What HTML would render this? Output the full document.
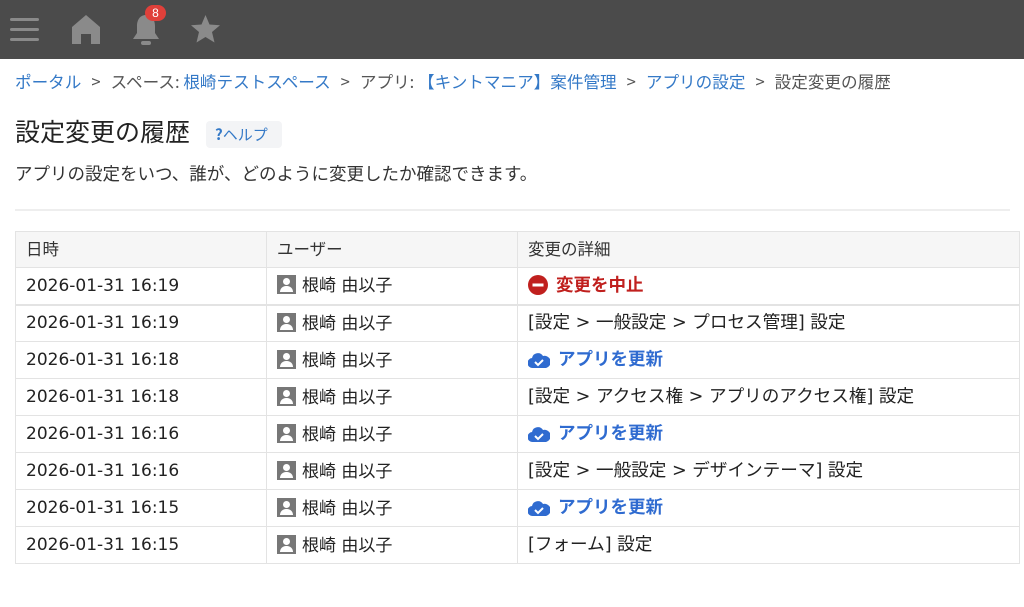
<!DOCTYPE html>
<html><head><meta charset="utf-8"><style>
*{margin:0;padding:0;box-sizing:border-box}
body{width:1024px;height:607px;overflow:hidden;background:#fff;font-family:"DejaVu Sans","Noto Sans CJK JP",sans-serif;color:#333}
.hdr{height:59px;background:#4b4b4b;position:relative}
.hdr svg{position:absolute}
.badge{position:absolute;left:145px;top:5px;width:21px;height:16px;border-radius:8px;background:#e0403a;color:#fff;font-size:12px;text-align:center;line-height:16px;font-family:"Liberation Sans",sans-serif}
.bc{position:absolute;top:69px;left:15px;font-size:16.6px;color:#555;white-space:nowrap;font-family:"Noto Sans CJK JP",sans-serif}
.bc a{color:#3479c7;text-decoration:none}
.bc .s{margin:0 10px}
h1{position:absolute;top:114px;left:15px;font-size:25px;font-weight:normal;color:#222;line-height:34px;font-family:"Noto Sans CJK JP",sans-serif}
.help{position:absolute;top:121px;left:206px;width:76px;height:27px;background:#f3f4f6;border-radius:4px;color:#3479c7;font-size:15px;line-height:27px;padding-left:9px;font-family:"Noto Sans CJK JP",sans-serif}
.desc{position:absolute;top:161px;left:15px;font-size:17.5px;color:#333;line-height:26px;font-family:"Noto Sans CJK JP",sans-serif}
.hr{position:absolute;top:209px;left:15px;width:995px;height:2px;background:#eee}
table{position:absolute;top:231px;left:15px;width:1005px;border-collapse:collapse;font-size:17px}
td{border:1px solid #e3e3e3;height:37px;padding:0 0 0 10px;color:#222;white-space:nowrap;line-height:20px;vertical-align:middle}
tr.h td{background:#f6f6f6;height:36px;color:#333;font-size:16.5px}
tr.t td{border-bottom:2px solid #e3e3e3}
td.d{font-size:17.6px}
.u{display:inline-block;width:19px;height:19px;background:#777;vertical-align:-3px;margin-right:6px;position:relative;overflow:hidden}
.u:before{content:"";position:absolute;left:6px;top:3px;width:7px;height:7px;border-radius:50%;background:#fff}
.u:after{content:"";position:absolute;left:3px;top:11px;width:13px;height:6px;border-radius:6px 6px 0 0;background:#fff}
.red{color:#c0201e;font-weight:bold;font-size:17.5px}
.blue{color:#2f6bd0;font-weight:bold;font-size:17.5px}
.ic{vertical-align:-4px;margin-right:8px}
</style></head><body>
<div class="hdr">
<svg style="left:10px;top:17px" width="30" height="26"><g fill="#8a8a8a"><rect x="0" y="1" width="29" height="3" rx="1.5"/><rect x="0" y="11" width="29" height="3" rx="1.5"/><rect x="0" y="21" width="29" height="3" rx="1.5"/></g></svg>
<svg style="left:71px;top:14px" width="30" height="31"><path d="M15 1 L29 13 V30 H20 V20 H10 V30 H1 V13 Z" fill="#8a8a8a"/></svg>
<svg style="left:131px;top:13px" width="30" height="33"><path d="M15 2 C9 2 6 7 6 13 V20 L2 26 H28 L24 20 V13 C24 7 21 2 15 2Z" fill="#8a8a8a"/><rect x="10" y="28" width="10" height="4" rx="2" fill="#8a8a8a"/></svg>
<div class="badge">8</div>
<svg style="left:190px;top:14px" width="31" height="30"><path d="M15.5 1 L19.5 10.5 L30 11.3 L22 18 L24.5 28.5 L15.5 23 L6.5 28.5 L9 18 L1 11.3 L11.5 10.5Z" fill="#8a8a8a"/></svg>
</div>
<div class="bc"><a>ポータル</a><span class="s">&gt;</span>スペース: <a>根崎テストスペース</a><span class="s">&gt;</span>アプリ: <a>【キントマニア】案件管理</a><span class="s">&gt;</span><a>アプリの設定</a><span class="s">&gt;</span>設定変更の履歴</div>
<h1>設定変更の履歴</h1>
<div class="help"><b>?</b>ヘルプ</div>
<div class="desc">アプリの設定をいつ、誰が、どのように変更したか確認できます。</div>
<div class="hr"></div>
<table>
<colgroup><col style="width:251px"><col style="width:251px"><col></colgroup>
<tr class="h"><td>日時</td><td>ユーザー</td><td>変更の詳細</td></tr>
<tr class="t"><td>2026-01-31 16:19</td><td><span class="u"></span>根崎 由以子</td><td><span class="red"><svg class="ic" width="20" height="20"><circle cx="10" cy="10" r="10" fill="#c0201e"/><rect x="4.5" y="8.5" width="11" height="3" fill="#fff"/></svg>変更を中止</span></td></tr>
<tr><td>2026-01-31 16:19</td><td><span class="u"></span>根崎 由以子</td><td class="d">[設定 &gt; 一般設定 &gt; プロセス管理] 設定</td></tr>
<tr><td>2026-01-31 16:18</td><td><span class="u"></span>根崎 由以子</td><td><span class="blue"><svg class="ic" width="22" height="18"><path d="M5 17 A5 5 0 0 1 4 7 A6 6 0 0 1 15 5 A5 5 0 0 1 18 17Z" fill="#2f6bd0"/><path d="M7 11 L10 14 L15 9" stroke="#fff" stroke-width="2" fill="none"/></svg>アプリを更新</span></td></tr>
<tr><td>2026-01-31 16:18</td><td><span class="u"></span>根崎 由以子</td><td class="d">[設定 &gt; アクセス権 &gt; アプリのアクセス権] 設定</td></tr>
<tr><td>2026-01-31 16:16</td><td><span class="u"></span>根崎 由以子</td><td><span class="blue"><svg class="ic" width="22" height="18"><path d="M5 17 A5 5 0 0 1 4 7 A6 6 0 0 1 15 5 A5 5 0 0 1 18 17Z" fill="#2f6bd0"/><path d="M7 11 L10 14 L15 9" stroke="#fff" stroke-width="2" fill="none"/></svg>アプリを更新</span></td></tr>
<tr><td>2026-01-31 16:16</td><td><span class="u"></span>根崎 由以子</td><td class="d">[設定 &gt; 一般設定 &gt; デザインテーマ] 設定</td></tr>
<tr><td>2026-01-31 16:15</td><td><span class="u"></span>根崎 由以子</td><td><span class="blue"><svg class="ic" width="22" height="18"><path d="M5 17 A5 5 0 0 1 4 7 A6 6 0 0 1 15 5 A5 5 0 0 1 18 17Z" fill="#2f6bd0"/><path d="M7 11 L10 14 L15 9" stroke="#fff" stroke-width="2" fill="none"/></svg>アプリを更新</span></td></tr>
<tr><td>2026-01-31 16:15</td><td><span class="u"></span>根崎 由以子</td><td class="d">[フォーム] 設定</td></tr>
</table>
</body></html>
